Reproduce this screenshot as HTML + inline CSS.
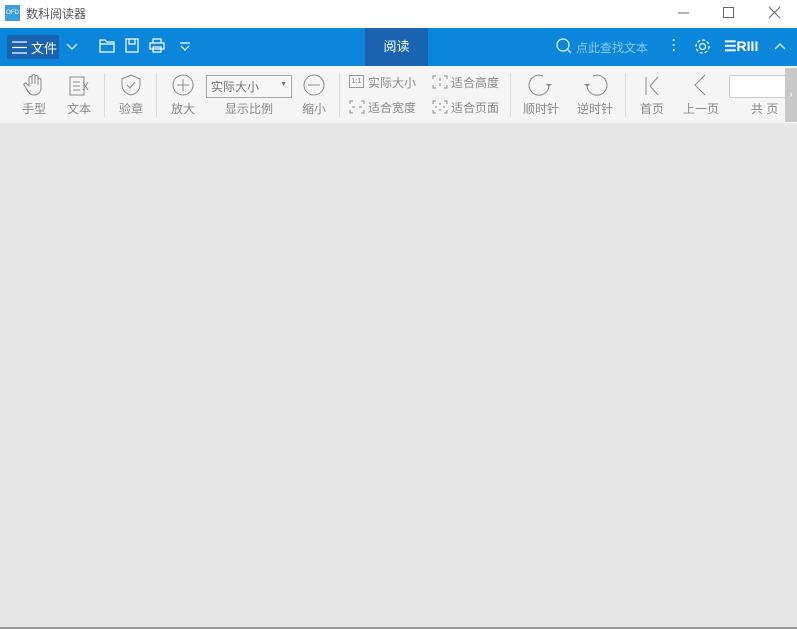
<!DOCTYPE html>
<html><head><meta charset="utf-8"><style>
*{margin:0;padding:0;box-sizing:border-box}
body{width:797px;height:629px;overflow:hidden;background:#e6e6e6;font-family:"Liberation Sans","Noto Sans CJK SC",sans-serif;position:relative}
.abs{position:absolute}
.title{top:0;left:0;width:797px;height:28px;background:#fff}
.blue{top:28px;left:0;width:797px;height:38px;background:#0a87da}
.tb{top:66px;left:0;width:797px;height:58px;background:#f5f5f5;border-bottom:1px solid #ececec}
.lbl{font-size:12px;color:#8a8a8a;position:absolute;white-space:nowrap}
.sep{position:absolute;top:73px;width:1px;height:44px;background:#dcdcdc}
svg{position:absolute;overflow:visible}
.ic{stroke:#8a8a8a;fill:none;stroke-width:1}
.w{stroke:#fff;fill:none;stroke-width:1.2}
</style></head><body>
<div class="abs title"></div>
<div class="abs" style="left:5px;top:5px;width:15px;height:16px;background:#3aa0e0;color:#fff;font-size:6px;line-height:16px;text-align:center">OFD</div>
<div class="abs" style="left:26px;top:5px;font-size:12px;color:#555">数科阅读器</div>
<svg style="left:676px;top:6px" width="100" height="16"><path d="M2 7h11" stroke="#666" fill="none"/><rect x="47.5" y="1.5" width="10" height="10" stroke="#666" fill="none"/><path d="M93 1l11 11M104 1l-11 11" stroke="#666" fill="none"/></svg>
<div class="abs blue"></div>
<div class="abs" style="left:7px;top:35px;width:52px;height:24px;background:#1a63b0;border-radius:2px"></div>
<svg style="left:12px;top:41px" width="16" height="14"><path class="w" d="M0 1h15M0 6.5h15M0 12h15"/></svg>
<div class="abs" style="left:31px;top:38px;font-size:13px;color:#fff">文件</div>
<svg style="left:66px;top:43px" width="12" height="8"><path class="w" d="M1 1l5 5 5-5"/></svg>
<svg style="left:99px;top:39px" width="16" height="14"><path class="w" d="M1 1h5l2 2h7v10H1z M1 5h14"/></svg>
<svg style="left:125px;top:38px" width="14" height="15"><path class="w" d="M1 1h12v13H1z M4 1v5h6V1"/></svg>
<svg style="left:149px;top:38px" width="16" height="15"><path class="w" d="M4 5V1h8v4 M1 5h14v6H1z M4 9h8v5H4z"/></svg>
<svg style="left:179px;top:42px" width="12" height="10"><path class="w" d="M1 1h10M2 4l4 4 4-4"/></svg>
<div class="abs" style="left:365px;top:28px;width:63px;height:38px;background:#1a63b0;color:#fff;font-size:13px;text-align:center;line-height:38px">阅读</div>
<svg style="left:556px;top:38px" width="16" height="16"><circle class="w" cx="7" cy="7" r="6"/><path class="w" d="M11 11l4 4"/></svg>
<div class="abs" style="left:576px;top:39px;font-size:12px;color:#8cc8f0">点此查找文本</div>
<div class="abs" style="left:672px;top:38px;width:3px;color:#fff;font-size:12px;line-height:5px;font-weight:bold">·<br>·<br>·</div>
<svg style="left:694px;top:38px" width="17" height="17"><circle class="w" cx="8.5" cy="8.5" r="3"/><circle class="w" cx="8.5" cy="8.5" r="6.5" stroke-dasharray="3 2"/></svg>
<div class="abs" style="left:724px;top:38px;font-size:14px;color:#fff;font-weight:bold">☰RIII</div>
<svg style="left:774px;top:42px" width="12" height="8"><path class="w" d="M1 7l5-5 5 5"/></svg>
<div class="abs tb"></div>
<svg style="left:24px;top:74px" width="20" height="22"><path class="ic" d="M5 12V4a1.5 1.5 0 013 0v6V2a1.5 1.5 0 013 0v8V3a1.5 1.5 0 013 0v8V6a1.5 1.5 0 013 0v8c0 4-3 7-7 7s-6-3-8-7l-2-3a1.5 1.5 0 012.5-1.5z"/></svg>
<div class="lbl" style="left:22px;top:100px">手型</div>
<svg style="left:69px;top:76px" width="20" height="20"><path class="ic" d="M1 1h14v18H1z M4 6h7M4 10h7M4 14h7 M14 6l5 8M19 6l-5 8"/></svg>
<div class="lbl" style="left:67px;top:100px">文本</div>
<div class="sep" style="left:104px"></div>
<svg style="left:120px;top:74px" width="22" height="22"><path class="ic" d="M11 1l9 4v6c0 5-4 9-9 10-5-1-9-5-9-10V5z M7 11l3 3 5-6"/></svg>
<div class="lbl" style="left:119px;top:100px">验章</div>
<div class="sep" style="left:156px"></div>
<svg style="left:172px;top:74px" width="22" height="22"><circle class="ic" cx="11" cy="11" r="10"/><path class="ic" d="M11 5v12M5 11h12"/></svg>
<div class="lbl" style="left:171px;top:100px">放大</div>
<div class="abs" style="left:206px;top:75px;width:86px;height:23px;border:1px solid #a8a8a8;background:#f7f7f7;font-size:12px;color:#777;padding:2px 4px">实际大小<span style="position:absolute;right:4px;top:5px;font-size:7px">▼</span></div>
<div class="lbl" style="left:225px;top:100px">显示比例</div>
<svg style="left:303px;top:74px" width="22" height="22"><circle class="ic" cx="11" cy="11" r="10"/><path class="ic" d="M5 11h12"/></svg>
<div class="lbl" style="left:302px;top:100px">缩小</div>
<div class="sep" style="left:339px"></div>
<div class="abs" style="left:349px;top:75px;width:15px;height:13px;border:1px solid #999;font-size:7px;color:#777;text-align:center;line-height:11px">1:1</div>
<div class="lbl" style="left:368px;top:74px">实际大小</div>
<svg style="left:349px;top:100px" width="16" height="14"><path class="ic" d="M1 4V1h3M12 1h3v3M15 10v3h-3M4 13H1v-3 M3 7h3M13 7h-3"/></svg>
<div class="lbl" style="left:368px;top:99px">适合宽度</div>
<svg style="left:432px;top:75px" width="16" height="14"><path class="ic" d="M1 4V1h3M12 1h3v3M15 10v3h-3M4 13H1v-3 M8 3v3M8 11V8"/></svg>
<div class="lbl" style="left:451px;top:74px">适合高度</div>
<svg style="left:432px;top:100px" width="16" height="14"><path class="ic" d="M1 4V1h3M12 1h3v3M15 10v3h-3M4 13H1v-3 M8 3v2M8 11V9M3 7h2M13 7h-2"/></svg>
<div class="lbl" style="left:451px;top:99px">适合页面</div>
<div class="sep" style="left:510px"></div>
<svg style="left:529px;top:74px" width="24" height="22"><path class="ic" d="M20 11A10 10 0 1 1 14 2"/><path d="M17 10l3 3 3-3" fill="#8a8a8a"/></svg>
<div class="lbl" style="left:523px;top:100px">顺时针</div>
<svg style="left:583px;top:74px" width="24" height="22"><path class="ic" d="M4 11A10 10 0 1 0 10 2"/><path d="M1 10l3 3 3-3" fill="#8a8a8a"/></svg>
<div class="lbl" style="left:577px;top:100px">逆时针</div>
<div class="sep" style="left:625px"></div>
<svg style="left:644px;top:76px" width="16" height="20"><path class="ic" d="M2 1v18M14 1L6 10l8 9"/></svg>
<div class="lbl" style="left:640px;top:100px">首页</div>
<svg style="left:692px;top:74px" width="16" height="22"><path class="ic" d="M13 1L3 11l10 10"/></svg>
<div class="lbl" style="left:683px;top:100px">上一页</div>
<div class="abs" style="left:729px;top:75px;width:60px;height:23px;border:1px solid #ccc;background:#fff"></div>
<div class="lbl" style="left:751px;top:100px">共 页</div>
<div class="abs" style="left:785px;top:68px;width:12px;height:54px;background:#c8c8c8;color:#fff;font-size:10px;line-height:54px;text-align:center">›</div>
<div class="abs" style="left:0;top:627px;width:797px;height:2px;background:#9a9a9a"></div>
</body></html>
